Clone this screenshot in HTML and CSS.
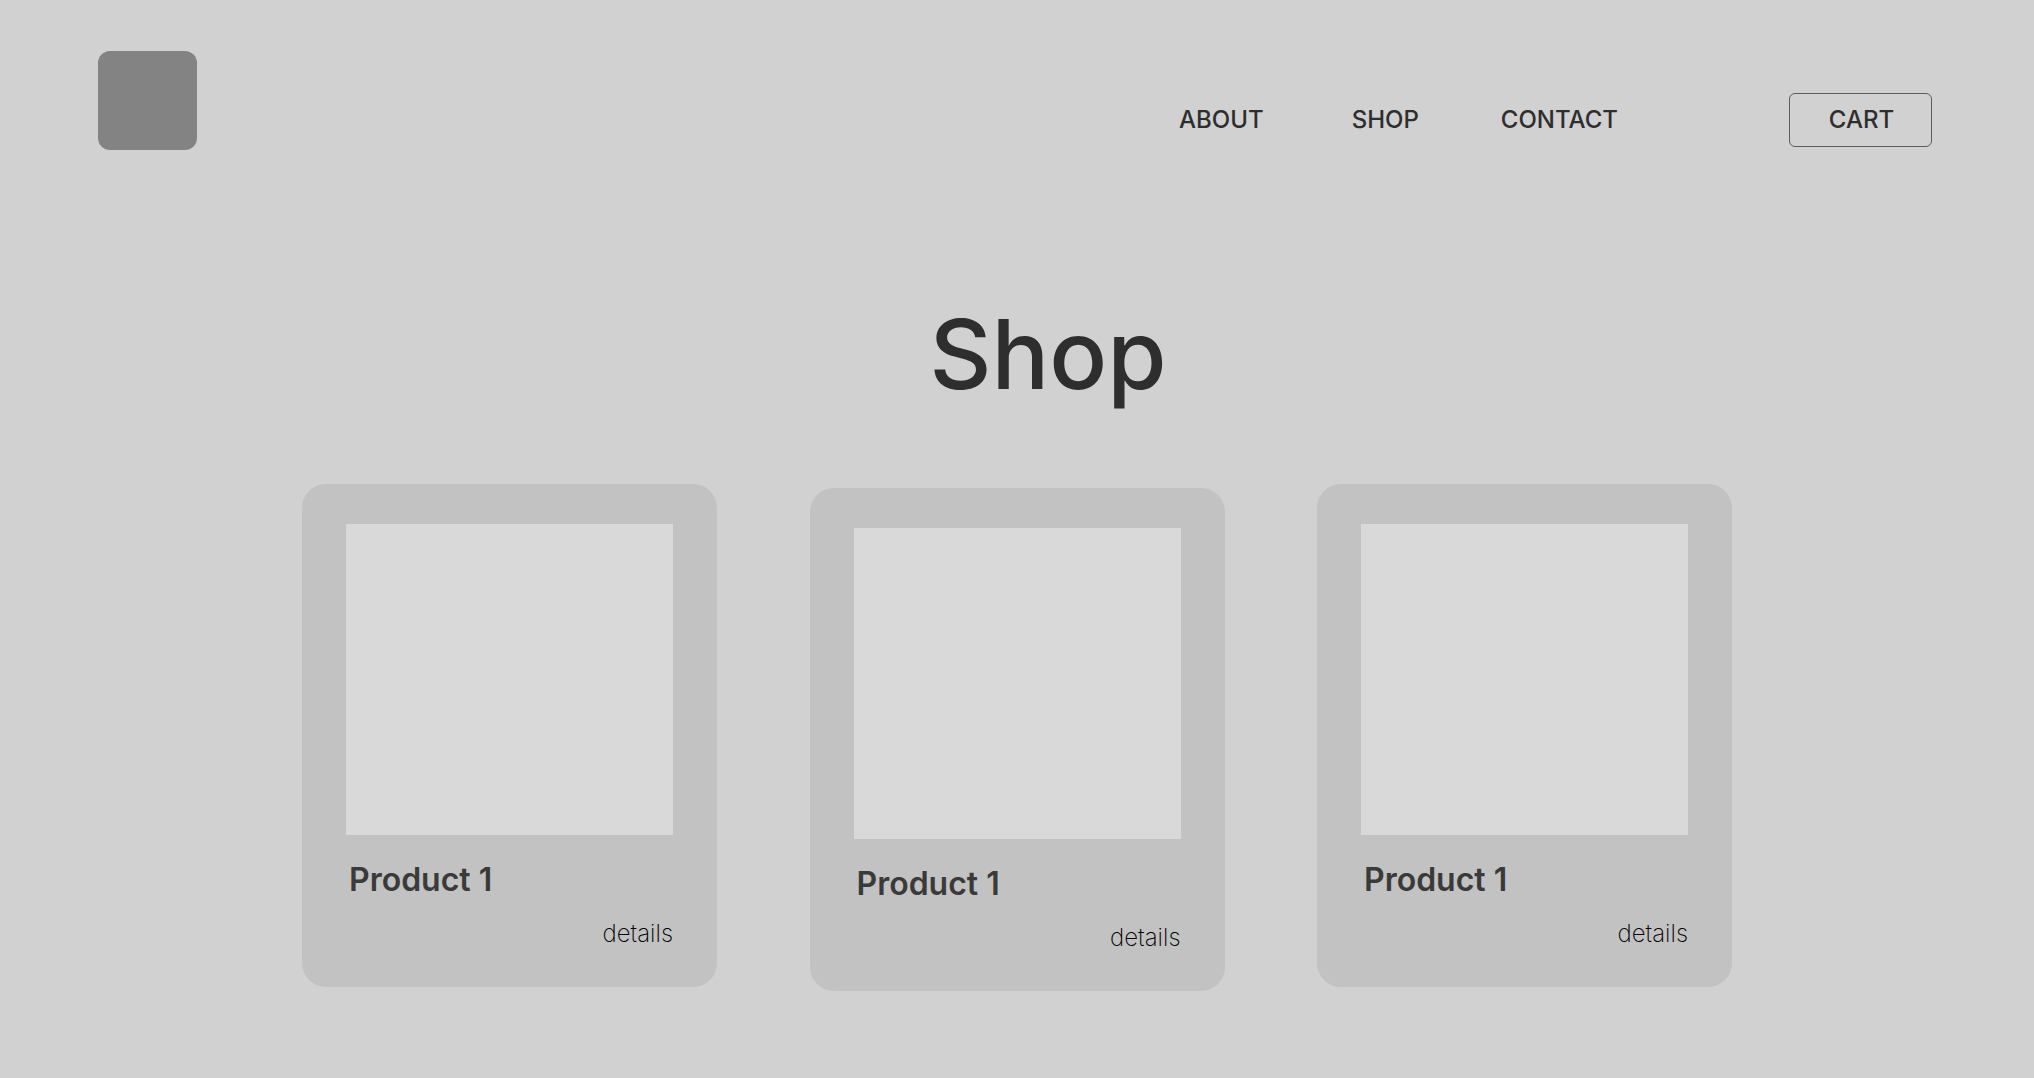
FILE: index.html
```html
<!DOCTYPE html>
<html lang="en">
<head>
<meta charset="utf-8">
<title>Shop</title>
<link rel="stylesheet" href="styles.css">
</head>
<body>
<header class="header">
  <a class="logo" href="#" aria-label="Home"></a>
  <nav class="nav">
    <a class="about" href="#">ABOUT</a>
    <a class="shop" href="#">SHOP</a>
    <a class="contact" href="#">CONTACT</a>
    <button class="cart" type="button">CART</button>
  </nav>
</header>
<main class="main">
  <h1 class="title">Shop</h1>
  <section class="products">
    <article class="card">
      <div class="photo"></div>
      <h2 class="name">Product 1</h2>
      <a class="details" href="#">details</a>
    </article>
    <article class="card card-lowered">
      <div class="photo"></div>
      <h2 class="name">Product 1</h2>
      <a class="details" href="#">details</a>
    </article>
    <article class="card">
      <div class="photo"></div>
      <h2 class="name">Product 1</h2>
      <a class="details" href="#">details</a>
    </article>
  </section>
</main>
</body>
</html>
```
FILE: styles.css
```css
* { box-sizing: border-box; }
body {
  margin: 0;
  background: #d1d1d1;
  color: #2e2e2e;
  font-family: Inter, sans-serif;
}
a { color: inherit; text-decoration: none; }
.header {
  display: flex;
  justify-content: space-between;
  align-items: flex-start;
  padding: 51px 102px 0 98px;
}
.logo {
  width: 99px;
  height: 99px;
  border-radius: 12px;
  background: #838383;
}
.nav {
  display: flex;
  align-items: center;
  padding-top: 42px;
  font-size: 24px;
  line-height: 32px;
  font-weight: 500;
}
.about { margin-right: 88px; }
.shop { margin-right: 82px; }
.contact { margin-right: 171px; }
.cart {
  width: 143px;
  height: 54px;
  padding: 0 0 0 2px;
  border: 1px solid #5c5c5c;
  border-radius: 6px;
  background: transparent;
  color: inherit;
  font: inherit;
}
.title {
  margin: 146px 0 0;
  padding-left: 62px;
  text-align: center;
  font-size: 96px;
  line-height: 116px;
  font-weight: 500;
}
.products {
  display: flex;
  justify-content: space-between;
  align-items: flex-start;
  max-width: 1430px;
  margin: 0 auto;
  padding: 72px 0;
}
.card {
  display: flex;
  flex-direction: column;
  width: 415px;
  padding: 40px 44px 39px;
  border-radius: 24px;
  background: #c2c2c2;
}
.card-lowered { margin-top: 4px; }
.photo {
  height: 311px;
  background: #d9d9d9;
}
.name {
  margin: 25px 0 0 3px;
  color: #3a3a3a;
  font-size: 32px;
  line-height: 40px;
  font-weight: 600;
}
.details {
  align-self: flex-end;
  margin-top: 20px;
  color: #000;
  font-size: 24px;
  line-height: 28px;
  font-weight: 200;
}
```
